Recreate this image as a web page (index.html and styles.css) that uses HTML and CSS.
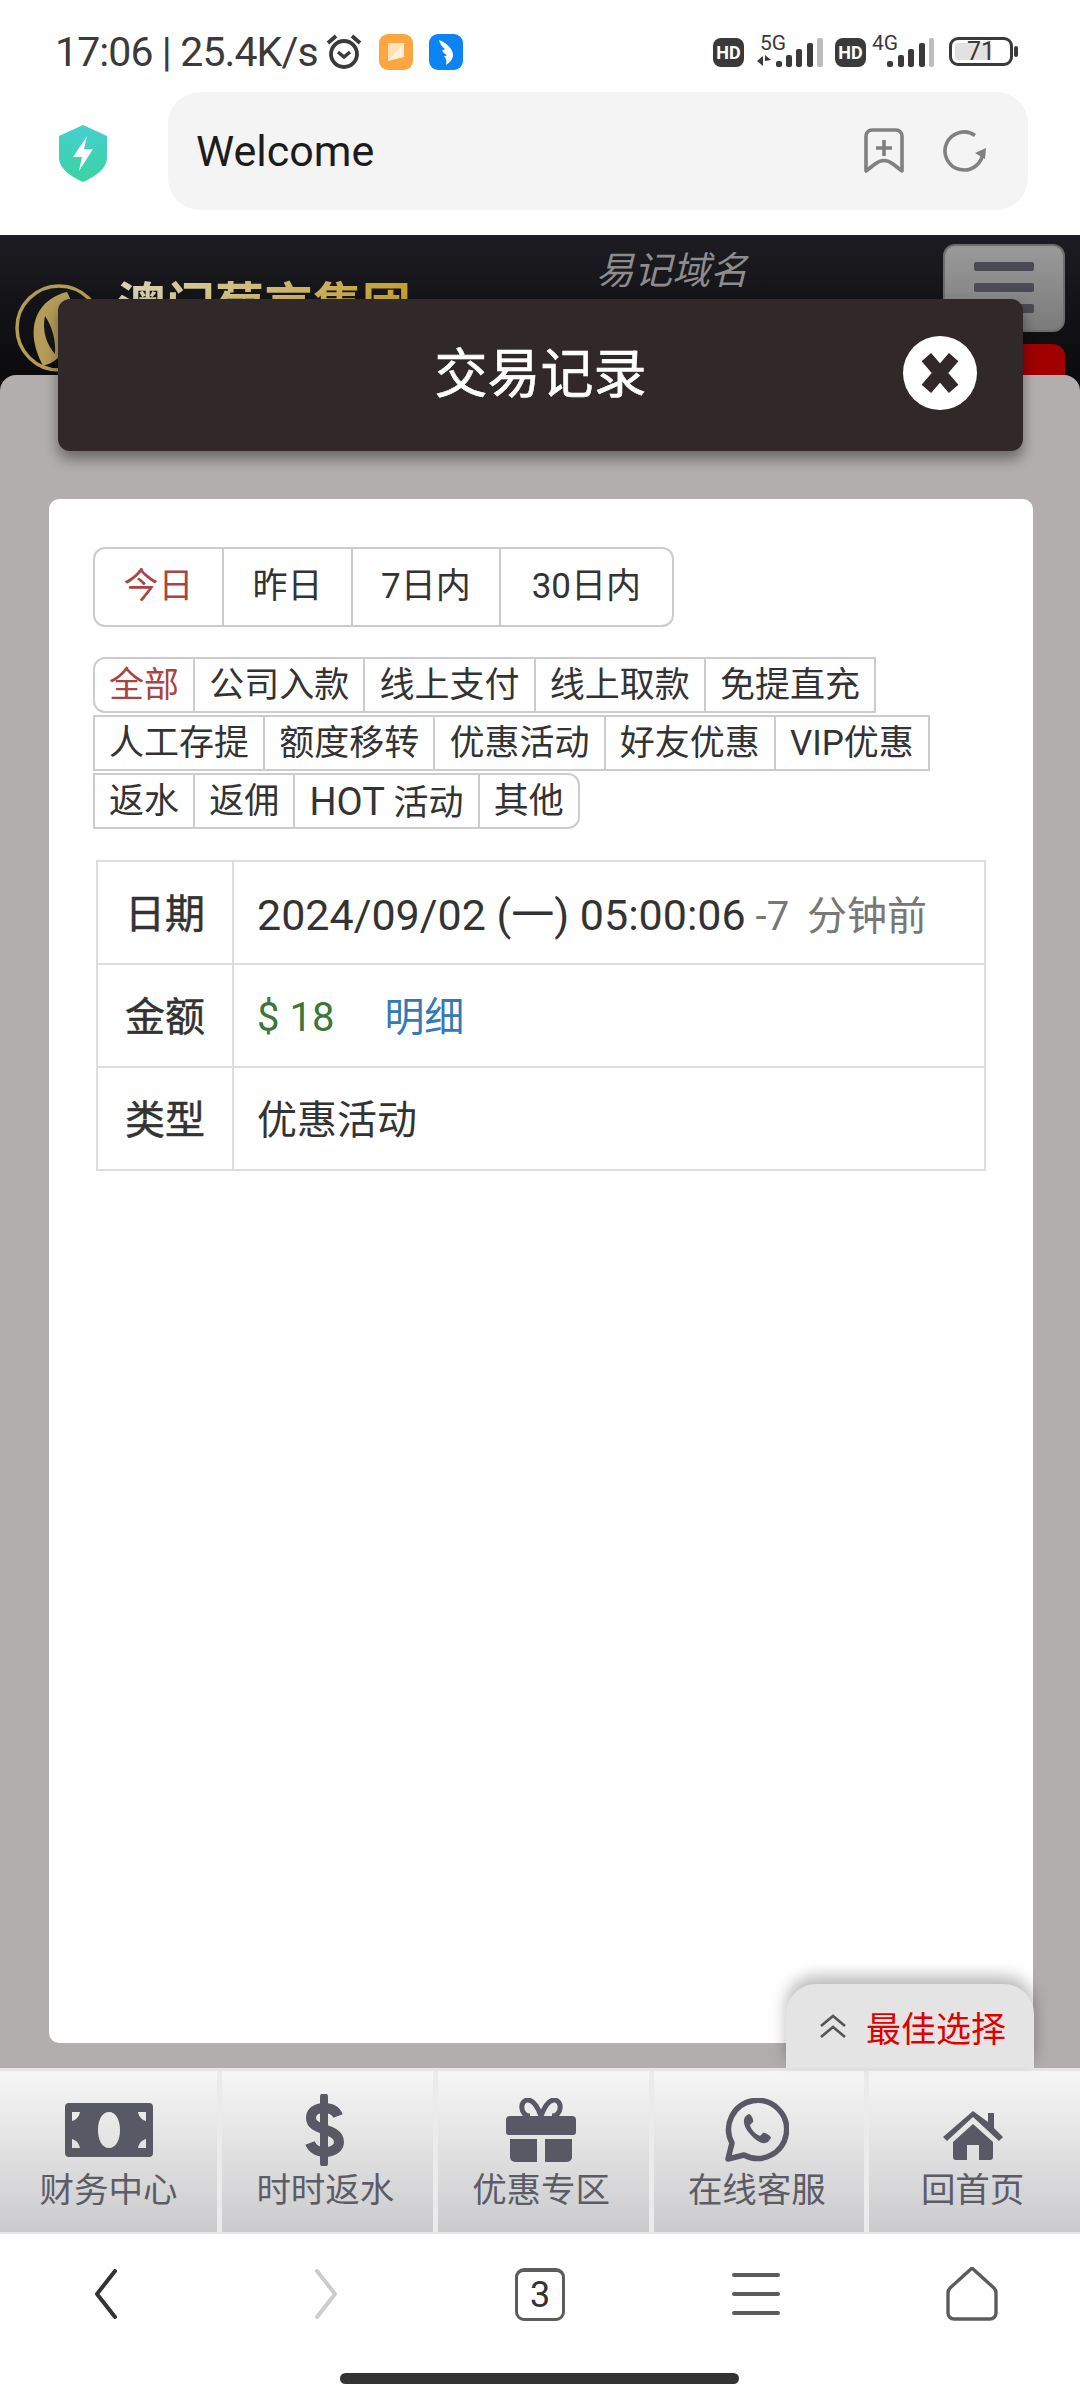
FILE: index.html
```html
<!DOCTYPE html>
<html lang="zh-CN">
<head>
  <meta charset="utf-8">
  <title>交易记录</title>
  <link rel="stylesheet" href="styles.css">
</head>
<body>
  <!-- phone status bar -->
  <header class="status">
    <span class="clock">17:06 | 25.4K/s</span>
    <svg class="ico-alarm" viewBox="0 0 38 38" width="38" height="38"><circle cx="19" cy="21" r="13" fill="none" stroke="#3a3a3a" stroke-width="3.8"/><path d="M13 19l6 5 6-5" fill="none" stroke="#3a3a3a" stroke-width="3.4"/><path d="M3 10l8-7M35 10l-8-7" stroke="#3a3a3a" stroke-width="3.8"/></svg>
    <svg class="ico-app" viewBox="0 0 34 36" width="34" height="36"><rect width="34" height="36" rx="9" fill="#fba63e"/><path d="M9 9h16v14l-16 4z" fill="#fde2b8"/><path d="M25 9v14l-16 4 16-18z" fill="#fff" opacity=".5"/></svg>
    <svg class="ico-app" viewBox="0 0 34 36" width="34" height="36"><rect width="34" height="36" rx="9" fill="#0c84f4"/><path d="M10 6c8 3 14 9 14 15 0 3-2 7-7 10 1-4 0-7-2-9 1 0 2 0 3-1-3-1-4-3-5-5 1 0 2 0 3-1-3-2-5-5-6-9z" fill="#fff"/></svg>
    <div class="status-right">
      <span class="hd">HD</span>
      <svg class="sig" viewBox="0 0 66 40" width="66" height="40"><text x="3" y="18" class="sig-txt">5G</text><path d="M0 29l6-5v10zM8 23l6 5-6 1v6h-0z" fill="#3a3a3a"/><rect x="19" y="29" width="6" height="6" rx="2" fill="#3a3a3a"/><rect x="29" y="23" width="6" height="12" rx="2" fill="#3a3a3a"/><rect x="39" y="17" width="6" height="18" rx="2" fill="#3a3a3a"/><rect x="50" y="11" width="6" height="24" rx="2" fill="#3a3a3a"/><rect x="60" y="6" width="6" height="29" rx="2" fill="#bdbdbd"/></svg>
      <span class="hd hd-next">HD</span>
      <svg class="sig sig-4g" viewBox="0 0 62 40" width="62" height="40"><text x="0" y="18" class="sig-txt">4G</text><rect x="15" y="29" width="6" height="6" rx="2" fill="#3a3a3a"/><rect x="26" y="23" width="6" height="12" rx="2" fill="#3a3a3a"/><rect x="36" y="17" width="6" height="18" rx="2" fill="#3a3a3a"/><rect x="47" y="11" width="6" height="24" rx="2" fill="#3a3a3a"/><rect x="57" y="6" width="5" height="29" rx="2" fill="#bdbdbd"/></svg>
      <span class="battery"><span class="battery-fill"></span><span class="battery-num">71</span></span>
      <span class="battery-tip"></span>
    </div>
  </header>

  <!-- browser address row -->
  <div class="addr">
    <svg class="shield" viewBox="0 0 50 58" width="50" height="58"><defs><linearGradient id="sh" x1="0" y1="0" x2="0" y2="1"><stop offset="0" stop-color="#45cfd0"/><stop offset="1" stop-color="#3cd3a2"/></linearGradient></defs><path d="M25 1l24 11v22c0 10-12 19-24 24C13 53 1 44 1 34V12z" fill="url(#sh)"/><path d="M29 12L15 33h9l-3 14 14-22h-9z" fill="#fff"/></svg>
    <div class="addr-box">
      <span class="addr-text">Welcome</span>
      <svg class="addr-ico" viewBox="0 0 42 48" width="42" height="48"><path d="M3 9a6 6 0 0 1 6-6h24a6 6 0 0 1 6 6v35l-9-7q-9-7-18 0l-9 7z" fill="none" stroke="#808080" stroke-width="3.6" stroke-linejoin="round"/><path d="M21 13v16M13 21h16" stroke="#808080" stroke-width="3.6"/></svg>
      <svg class="addr-ico addr-reload" viewBox="0 0 44 44" width="44" height="44"><path d="M40 22a19 19 0 1 1-8-15.500" fill="none" stroke="#808080" stroke-width="3.6"/><path d="M43 19l-1 11-10-6z" fill="#808080"/></svg>
    </div>
  </div>

  <div class="site">
    <div class="site-head">
      <svg class="logo" viewBox="0 0 90 96" width="90" height="96"><circle cx="44" cy="48" r="42" fill="none" stroke="#b49a55" stroke-width="3.500"/><path d="M52 12C26 18 6 44 28 86 50 80 72 50 52 12z" fill="#b69c58"/><path d="M30 36c-3 14 1 28 10 38 1-14-3-28-10-38z" fill="#16151a"/></svg>
      <div class="brand">澳门葡京集团</div>
      <div class="domain">易记域名</div>
      <div class="head-right">
        <div class="menu-btn"><span></span><span></span><span></span></div>
        <div class="red-btn"></div>
      </div>

      <!-- modal on top of the site -->
      <div class="modal">
        <div class="modal-title">
          <span class="modal-name">交易记录</span>
          <span class="close">
            <svg viewBox="0 0 44 44" width="50" height="50"><path d="M10 8l24 28M34 8L10 36" stroke="#302829" stroke-width="11"/></svg>
          </span>
        </div>
        <div class="card">
          <div class="range">
            <a class="on">今日</a><a>昨日</a><a>7日内</a><a>30日内</a>
          </div>
          <div class="types">
            <a class="on first">全部</a><a>公司入款</a><a>线上支付</a><a>线上取款</a><a>免提直充</a>
            <a>人工存提</a><a>额度移转</a><a>优惠活动</a><a>好友优惠</a><a>VIP优惠</a>
            <a>返水</a><a>返佣</a><a><span class="latin">HOT</span> 活动</a><a class="last">其他</a>
          </div>
          <table class="rec">
            <tr><th>日期</th><td><span class="stamp">2024/09/02 (一) 05:00:06</span> <span class="ago">-7 分钟前</span></td></tr>
            <tr><th>金额</th><td><span class="amt">$ 18</span><span class="detail">明细</span></td></tr>
            <tr><th>类型</th><td>优惠活动</td></tr>
          </table>
        </div>
        <div class="best">
          <svg viewBox="0 0 28 24" width="28" height="24"><path d="M2 12L14 2l12 10M2 23l12-10 12 10" fill="none" stroke="#555" stroke-width="2.600"/></svg>
          <span>最佳选择</span>
        </div>
      </div>
    </div>

    <nav class="tabs">
      <a>
        <span class="tab-ico"><svg viewBox="0 0 88 54" width="88" height="54"><path fill-rule="evenodd" d="M4 0h80a4 4 0 0 1 4 4v46a4 4 0 0 1-4 4H4a4 4 0 0 1-4-4V4a4 4 0 0 1 4-4zM7 9v9c4-1 7-4 8-9zM81 9h-8c1 5 4 8 8 9zM7 45h8c-1-5-4-8-8-9zM81 45v-9c-4 1-7 4-8 9zM44 9c-7 0-11 8-11 18s4 18 11 18 11-8 11-18S51 9 44 9z" fill="#595965"/></svg></span>
        <span>财务中心</span>
      </a>
      <a>
        <span class="tab-ico"><svg viewBox="0 0 44 72" width="44" height="72"><path d="M21 3v66" stroke="#595965" stroke-width="8" stroke-linecap="round"/><path d="M35 22c-2-5-7-8-14-8-8 0-13 4-13 10 0 14 28 9 28 24 0 6-6 10-14 10-8 0-13-4-15-9" fill="none" stroke="#595965" stroke-width="10"/></svg></span>
        <span>时时返水</span>
      </a>
      <a>
        <span class="tab-ico"><svg viewBox="0 0 70 64" width="70" height="64"><path d="M24 18c-10 0-11-16-2-16 6 0 10 8 13 16 3-8 7-16 13-16 9 0 8 16-2 16" fill="none" stroke="#595965" stroke-width="5"/><path d="M4 18h62a4 4 0 0 1 4 4v12a3 3 0 0 1-3 3H3a3 3 0 0 1-3-3V22a4 4 0 0 1 4-4zM4 41h27v23H9a5 5 0 0 1-5-5zM39 41h27v18a5 5 0 0 1-5 5H39z" fill="#595965"/></svg></span>
        <span>优惠专区</span>
      </a>
      <a>
        <span class="tab-ico"><svg viewBox="0 0 64 64" width="64" height="64"><path d="M3 61l4-16a29 29 0 1 1 12 12z" fill="none" stroke="#595965" stroke-width="5.500" stroke-linejoin="round"/><path d="M22 17c-5 4-4 11 3 19s13 11 18 8l3-4c0-2-6-6-8-5l-3 3c-5-2-9-7-10-11l3-3c1-2-2-8-4-8z" fill="#595965"/></svg></span>
        <span>在线客服</span>
      </a>
      <a>
        <span class="tab-ico tab-home"><svg viewBox="0 0 62 50" width="62" height="50"><path d="M46 2h6v15l9 9-4 4L31 6 5 30l-4-4L31 0l15 11zM31 13l20 18v15a3 3 0 0 1-3 3H37V34H25v15H14a3 3 0 0 1-3-3V31z" fill="#595965"/></svg></span>
        <span>回首页</span>
      </a>
    </nav>
  </div>

  <!-- browser bottom bar -->
  <footer class="bar">
    <div class="bar-row">
      <svg viewBox="0 0 28 50" width="28" height="50"><path d="M21 2L3 25l18 23" fill="none" stroke="#333" stroke-width="4" stroke-linecap="round" stroke-linejoin="round"/></svg>
      <svg viewBox="0 0 28 50" width="28" height="50"><path d="M7 2l18 23L7 48" fill="none" stroke="#ccc" stroke-width="4" stroke-linecap="round" stroke-linejoin="round"/></svg>
      <span class="tab-count">3</span>
      <span class="bar-menu"><i></i><i></i><i></i></span>
      <svg viewBox="0 0 52 54" width="52" height="54"><path d="M25 2q1-1 2 0l21 19q2 2 2 5v20a6 6 0 0 1-6 6H8a6 6 0 0 1-6-6V26q0-3 2-5z" fill="none" stroke="#5c5c5c" stroke-width="3.400" stroke-linejoin="round"/></svg>
    </div>
    <div class="home-bar"></div>
  </footer>
</body>
</html>
```

FILE: styles.css
```css
* {
  box-sizing: border-box;
}
body, html {
  width: 1080px;
  height: 2400px;
  margin: 0;
  padding: 0;
  overflow: hidden;
  background: #fff;
  color: #333;
  font-family: Roboto, "Noto Sans CJK SC", sans-serif;
}
body {
  display: flex;
  flex-direction: column;
}

/* status bar */
.status {
  height: 92px;
  display: flex;
  align-items: center;
  padding: 12px 0 0 55px;
  flex: none;
}
.clock {
  font-size: 41px;
  letter-spacing: -0.9px;
  color: #3a3a3a;
  width: 270px;
  white-space: nowrap;
}
.ico-alarm {
  margin-right: 16px;
}
.ico-app {
  margin-right: 16px;
}
.status-right {
  margin-left: auto;
  margin-right: 62px;
  align-self: flex-start;
  margin-top: 20px;
  display: flex;
  align-items: flex-start;
}
.hd {
  width: 31px;
  height: 29px;
  margin-top: 6px;
  border-radius: 8px;
  background: #3a3a3a;
  color: #fff;
  font-size: 18px;
  font-weight: 700;
  display: flex;
  align-items: center;
  justify-content: center;
}
.hd-next {
  margin-left: 12px;
}
.sig {
  margin-left: 13px;
}
.sig-4g {
  margin-left: 6px;
}
.sig-txt {
  font-size: 21px;
  fill: #3a3a3a;
}
.battery {
  width: 64px;
  height: 29px;
  margin-left: 15px;
  margin-top: 5px;
  border: 3.5px solid #3a3a3a;
  border-radius: 9px;
  position: relative;
  display: flex;
  align-items: center;
  justify-content: center;
}
.battery-fill {
  position: absolute;
  left: 3px;
  top: 3px;
  bottom: 3px;
  width: 36px;
  border-radius: 3px;
  background: #e2e2e2;
}
.battery-num {
  position: relative;
  font-size: 25px;
  line-height: 22px;
  color: #3a3a3a;
}
.battery-tip {
  width: 4px;
  height: 11px;
  margin: 14px 0 0 1px;
  background: #3a3a3a;
  border-radius: 2px;
}

/* address row */
.addr {
  height: 143px;
  flex: none;
  display: flex;
  align-items: flex-start;
  padding-left: 58px;
}
.shield {
  margin-top: 32px;
}
.addr-box {
  width: 860px;
  height: 118px;
  margin-left: 60px;
  background: #f4f4f4;
  border-radius: 32px;
  display: flex;
  align-items: center;
  padding: 0 41px 0 28px;
}
.addr-text {
  font-size: 43px;
  color: #1c1c1c;
  flex: 1;
}
.addr-reload {
  margin-left: 38px;
}

/* the site behind the modal */
.site {
  flex: 1;
  display: flex;
  flex-direction: column;
}
.site-head {
  flex: 1;
  position: relative;
  display: flex;
  align-items: flex-start;
  padding: 0 15px;
  background: linear-gradient(#1c1c22, #0b0b0d 140px);
}
.logo {
  margin-top: 45px;
  flex: none;
}
.brand {
  margin: 42px 0 0 12px;
  font-size: 49px;
  font-weight: 700;
  line-height: 60px;
  color: transparent;
  background: linear-gradient(90deg, #d8d2b8, #c49f2e);
  background-clip: text;
  -webkit-background-clip: text;
  white-space: nowrap;
  width: 294px;
}
.domain {
  margin: 12px 0 0 185px;
  font-size: 38px;
  font-style: italic;
  color: #8c8c8c;
  line-height: 48px;
}
.head-right {
  margin-left: auto;
  width: 122px;
  padding-top: 9px;
}
.menu-btn {
  height: 88px;
  border-radius: 12px;
  border: 2px solid #6d6d6d;
  background: linear-gradient(#999, #7b7b7b);
  padding-top: 16px;
  display: flex;
  flex-direction: column;
  align-items: center;
  gap: 12px;
}
.menu-btn span {
  width: 60px;
  height: 9px;
  background: #4a4a56;
  border-radius: 2px;
}
.red-btn {
  width: 60px;
  height: 50px;
  margin: 12px 0 0 auto;
  background: #a00000;
  border-radius: 12px;
}

/* modal */
.modal {
  position: absolute;
  left: 0;
  right: 0;
  top: 140px;
  bottom: 0;
  background: #b3aeae;
  border-radius: 16px 16px 0 0;
  padding: 124px 47px 25px 49px;
}
.modal-title {
  position: absolute;
  left: 58px;
  width: 965px;
  top: -76px;
  height: 152px;
  background: #302829;
  border-radius: 12px;
  box-shadow: 0 8px 14px rgba(0, 0, 0, .4);
  color: #fff;
  font-size: 53px;
  display: flex;
  align-items: center;
  justify-content: center;
  padding-bottom: 10px;
}
.modal-name {
  -webkit-text-stroke: .6px #fff;
}
.close {
  position: absolute;
  right: 46px;
  top: 37px;
  width: 74px;
  height: 74px;
  border-radius: 50%;
  background: #fff;
  display: flex;
  align-items: center;
  justify-content: center;
}
.card {
  height: 100%;
  background: #fff;
  border-radius: 10px;
  padding: 48px 0 0 44px;
}
.range {
  display: inline-flex;
  height: 80px;
  border: 2px solid #ccc;
  border-radius: 12px;
  font-size: 35px;
}
.range a {
  padding: 0 28.5px;
  line-height: 76px;
  border-left: 2px solid #ccc;
}
.range a:first-child {
  border-left: 0;
}
.range a:nth-child(3) {
  padding: 0 28px;
}
.range a:last-child {
  padding: 0 31px;
}
.on {
  color: #a94442;
}
.types {
  display: flex;
  flex-wrap: wrap;
  width: 845px;
  row-gap: 2px;
  margin-top: 30px;
  padding-left: 2px;
  font-size: 35px;
}
.types a {
  height: 56px;
  line-height: 54px;
  padding: 0 14.1px;
  margin-left: -2px;
  border: 2px solid #ccc;
  white-space: nowrap;
}
.types .first {
  border-radius: 12px 0 0 12px;
}
.types .last {
  border-radius: 0 12px 12px 0;
}
.latin {
  font-size: 38px;
}
.rec {
  width: 890px;
  margin: 31px 0 0 3px;
  border-collapse: collapse;
  font-size: 40px;
}
.rec th, .rec td {
  height: 103px;
  border: 2px solid #ddd;
  padding: 0 0 4px 23px;
  font-weight: 400;
  text-align: left;
  white-space: nowrap;
}
.rec th {
  width: 136px;
  padding: 0 0 4px;
  text-align: center;
  -webkit-text-stroke: .5px #333;
}
.stamp {
  font-size: 43px;
}
.ago {
  color: #777;
  word-spacing: 8px;
}
.amt {
  color: #3c763d;
}
.detail {
  margin-left: 50px;
  color: #337ab7;
}
.best {
  position: absolute;
  right: 46px;
  bottom: 0;
  width: 248px;
  height: 84px;
  background: #e4e4e4;
  border-radius: 30px 30px 0 0;
  box-shadow: 0 -8px 16px rgba(0, 0, 0, .28);
  display: flex;
  align-items: center;
  padding-left: 33px;
  gap: 19px;
  color: #e00000;
  font-size: 35px;
}

/* bottom tabs of the site */
.tabs {
  height: 166px;
  flex: none;
  display: flex;
  border-top: 3px solid #e6e6e6;
  border-bottom: 2px solid #e6e6e6;
}
.tabs a {
  flex: 1;
  height: 100%;
  display: flex;
  flex-direction: column;
  align-items: center;
  padding: 23px 4px 0 0;
  background: linear-gradient(#f6f6f6, #cbcbcd);
  border-left: 5px solid #ebebeb;
  color: #5c5c68;
  font-size: 34.5px;
  line-height: 40px;
}
.tabs a:first-child {
  flex: 0 0 217px;
  padding-right: 0;
  border-left: 0;
}
.tab-ico {
  height: 72px;
  margin-bottom: 4px;
  display: flex;
  align-items: center;
}
.tab-home {
  padding-top: 12px;
}

/* browser bottom */
.bar {
  height: 166px;
  flex: none;
}
.bar-row {
  height: 120px;
  display: grid;
  grid-template-columns: repeat(5, 1fr);
  align-items: center;
  justify-items: center;
}
.tab-count {
  width: 50px;
  height: 53px;
  border: 3px solid #5c5c5c;
  border-top-width: 4px;
  border-radius: 9px;
  font-size: 36px;
  color: #333;
  display: flex;
  align-items: center;
  justify-content: center;
}
.bar-menu {
  width: 48px;
  height: 42px;
  display: flex;
  flex-direction: column;
  justify-content: space-between;
}
.bar-menu i {
  height: 4px;
  background: #5c5c5c;
  border-radius: 2px;
}
.home-bar {
  width: 399px;
  height: 11px;
  margin: 19px 0 0 340px;
  background: #333;
  border-radius: 6px;
}
```
